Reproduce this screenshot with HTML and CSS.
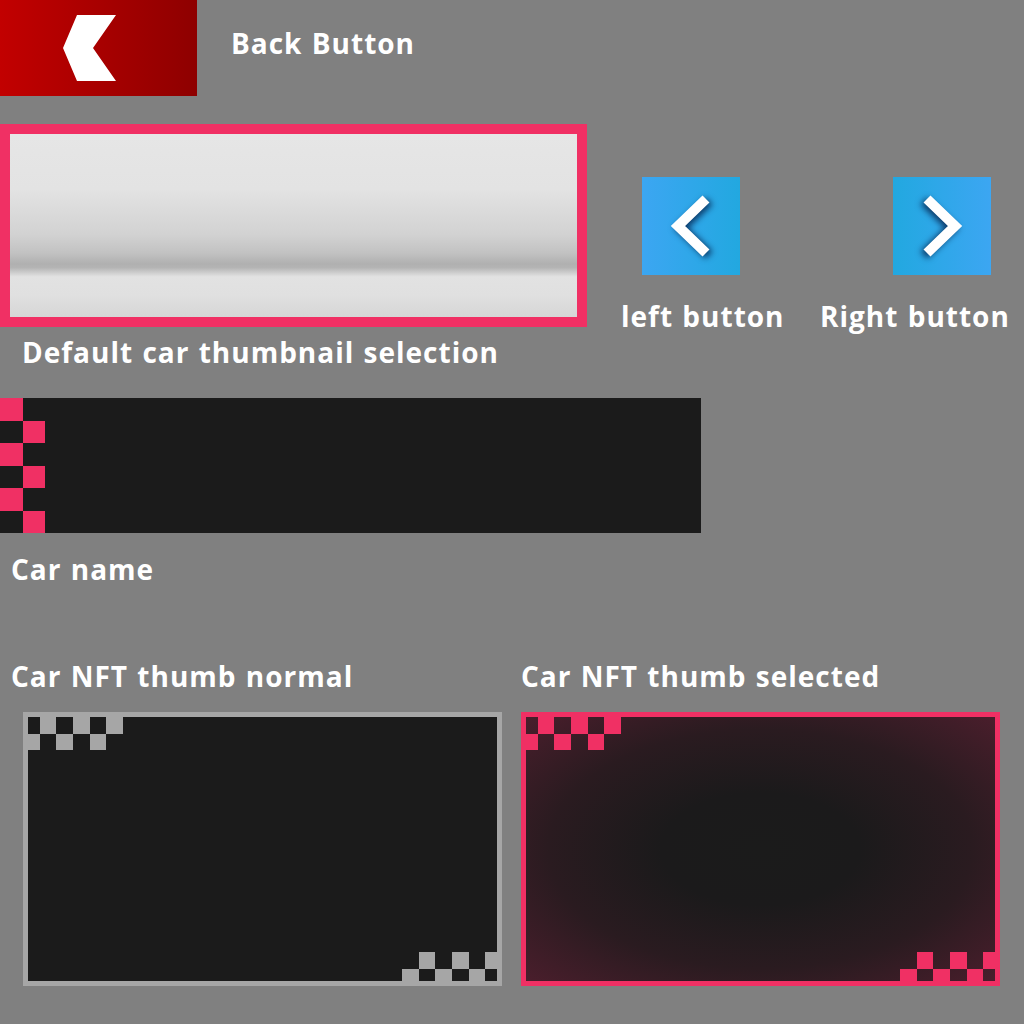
FILE: index.html
```html
<!DOCTYPE html>
<html>
<head>
<meta charset="utf-8">
<link rel="stylesheet" href="styles.css">
</head>
<body>
<div class="page">
  <div class="row-back">
    <div class="back-btn">
      <svg width="197" height="96" viewBox="0 0 197 96"><polygon points="77,15 116,15 93,48 116,81 77,81 63,48" fill="#fff"/></svg>
    </div>
    <div class="label label-back">Back Button</div>
  </div>

  <div class="row-thumb">
    <div class="thumb-col">
      <div class="thumb-default"></div>
      <div class="label label-default">Default car thumbnail selection</div>
    </div>
    <div class="arrow-group arrow-left">
      <div class="arrow-btn arrow-btn-left">
        <svg width="98" height="98" viewBox="0 0 98 98"><polyline points="64,22 36,49 64,76" fill="none" stroke="#fff" stroke-width="10"/></svg>
      </div>
      <div class="label">left button</div>
    </div>
    <div class="arrow-group arrow-right">
      <div class="arrow-btn arrow-btn-right">
        <svg width="98" height="98" viewBox="0 0 98 98"><polyline points="34,22 62,49 34,76" fill="none" stroke="#fff" stroke-width="10"/></svg>
      </div>
      <div class="label">Right button</div>
    </div>
  </div>

  <div class="name-bar">
    <svg class="name-checker" width="45" height="135" viewBox="0 0 2 6" preserveAspectRatio="none" shape-rendering="crispEdges">
      <rect x="0" y="0" width="1" height="1" class="pk"/>
      <rect x="1" y="1" width="1" height="1" class="pk"/>
      <rect x="0" y="2" width="1" height="1" class="pk"/>
      <rect x="1" y="3" width="1" height="1" class="pk"/>
      <rect x="0" y="4" width="1" height="1" class="pk"/>
      <rect x="1" y="5" width="1" height="1" class="pk"/>
    </svg>
  </div>
  <div class="label label-name">Car name</div>

  <div class="row-nft">
    <div class="nft-col nft-col-normal">
      <div class="label">Car NFT thumb normal</div>
      <div class="nft-frame nft-normal">
        <svg class="chk chk-tl" viewBox="0 0 6 2" preserveAspectRatio="none" shape-rendering="crispEdges">
          <rect x="1" y="0" width="1" height="1"/><rect x="3" y="0" width="1" height="1"/><rect x="5" y="0" width="1" height="1"/>
          <rect x="0" y="1" width="1" height="1"/><rect x="2" y="1" width="1" height="1"/><rect x="4" y="1" width="1" height="1"/>
        </svg>
        <svg class="chk chk-br" viewBox="0 0 6 2" preserveAspectRatio="none" shape-rendering="crispEdges">
          <rect x="1" y="0" width="1" height="1"/><rect x="3" y="0" width="1" height="1"/><rect x="5" y="0" width="1" height="1"/>
          <rect x="0" y="1" width="1" height="1"/><rect x="2" y="1" width="1" height="1"/><rect x="4" y="1" width="1" height="1"/>
        </svg>
      </div>
    </div>
    <div class="nft-col nft-col-selected">
      <div class="label">Car NFT thumb selected</div>
      <div class="nft-frame nft-selected">
        <svg class="chk chk-tl" viewBox="0 0 6 2" preserveAspectRatio="none" shape-rendering="crispEdges">
          <rect x="1" y="0" width="1" height="1"/><rect x="3" y="0" width="1" height="1"/><rect x="5" y="0" width="1" height="1"/>
          <rect x="0" y="1" width="1" height="1"/><rect x="2" y="1" width="1" height="1"/><rect x="4" y="1" width="1" height="1"/>
        </svg>
        <svg class="chk chk-br" viewBox="0 0 6 2" preserveAspectRatio="none" shape-rendering="crispEdges">
          <rect x="1" y="0" width="1" height="1"/><rect x="3" y="0" width="1" height="1"/><rect x="5" y="0" width="1" height="1"/>
          <rect x="0" y="1" width="1" height="1"/><rect x="2" y="1" width="1" height="1"/><rect x="4" y="1" width="1" height="1"/>
        </svg>
      </div>
    </div>
  </div>
</div>
</body>
</html>
```

FILE: styles.css
```css
html, body {
  margin: 0;
  padding: 0;
  background: #808080;
}
.page {
  width: 1024px;
  height: 1024px;
  overflow: hidden;
  font-family: "Open Sans", "Lato", sans-serif;
  font-weight: 700;
  color: #fff;
}
.label {
  font-size: 28px;
  line-height: 34px;
  letter-spacing: 1px;
  word-spacing: 1px;
  color: #fff;
  white-space: nowrap;
}

.row-back {
  display: flex;
  align-items: center;
  height: 96px;
}
.back-btn {
  width: 197px;
  height: 96px;
  background: linear-gradient(to right, #c20000, #8e0000);
}
.back-btn svg { display: block; }
.label-back {
  margin-left: 34px;
  margin-top: -10px;
}

.row-thumb {
  display: flex;
  margin-top: 28px;
  height: 250px;
}
.thumb-col {
  width: 621px;
}
.thumb-default {
  width: 587px;
  height: 203px;
  box-sizing: border-box;
  border: 10px solid #f03064;
  background: linear-gradient(to bottom,
    #e6e6e6 0%, #e3e3e3 30%, #d2d2d2 55%, #c2c2c2 65%, #b0b0b0 71%,
    #b4b4b4 73%, #e2e2e2 78%, #e0e0e0 88%, #d6d6d6 100%);
}
.label-default {
  margin-left: 22px;
  margin-top: 8px;
}

.arrow-group {
  display: flex;
  flex-direction: column;
  padding-top: 53px;
}
.arrow-left { width: 199px; }
.arrow-left .arrow-btn { margin-left: 21px; }
.arrow-right .arrow-btn { margin-left: 73px; }
.arrow-group .label { margin-top: 24px; }
.arrow-btn {
  width: 98px;
  height: 98px;
}
.arrow-btn svg { display: block; }
.arrow-btn-left {
  background: linear-gradient(to right, #3ca6f2, #22a8e0);
}
.arrow-btn-left svg { filter: drop-shadow(3px 2px 3px rgba(0, 20, 60, 0.75)); }
.arrow-btn-right {
  background: linear-gradient(to right, #22a8e0, #3ca6f2);
}
.arrow-btn-right svg { filter: drop-shadow(-3px 2px 3px rgba(0, 20, 60, 0.75)); }

.name-bar {
  margin-top: 24px;
  width: 701px;
  height: 135px;
  background: #1b1b1b;
  display: flex;
}
.name-checker { display: block; }
.pk { fill: #f03064; }
.label-name {
  margin-left: 11px;
  margin-top: 19px;
}

.row-nft {
  display: grid;
  grid-template-columns: 510px 479px;
  column-gap: 0;
  margin-top: 73px;
  padding-left: 11px;
}
.nft-col .label { margin-bottom: 19px; }
.nft-col-normal .nft-frame { margin-left: 12px; }
.nft-frame {
  position: relative;
  width: 479px;
  height: 274px;
  box-sizing: border-box;
  border: 5px solid #a6a6a6;
}
.nft-normal {
  background: #1b1b1b;
}
.nft-selected {
  border-color: #f03064;
  background: radial-gradient(farthest-corner ellipse at 50% 50%, #1b1b1b 0%, #1b1a1b 30%, #2a1b20 64%, #4a1e2c 100%);
}
.chk {
  position: absolute;
  width: 100px;
  height: 33px;
  display: block;
}
.chk-tl { left: -5px; top: 0; }
.chk-br { right: -5px; bottom: -5px; height: 34px; }
.nft-normal .chk rect { fill: #a6a6a6; }
.nft-selected .chk rect { fill: #f03064; }
```
